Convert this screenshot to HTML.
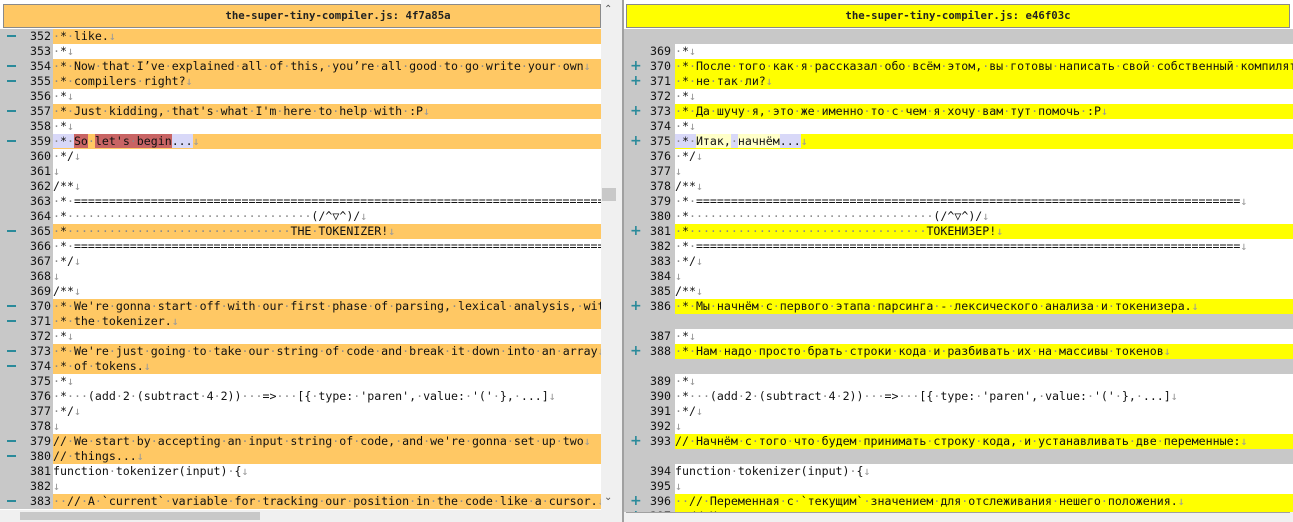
<!DOCTYPE html>
<html><head><meta charset="utf-8">
<style>
*{margin:0;padding:0;box-sizing:border-box}
body{width:1293px;height:522px;overflow:hidden;background:#f0f0f0;position:relative;font-family:"DejaVu Sans Mono","Liberation Mono",monospace}
.pane{position:absolute;top:0;height:522px;background:#fff;overflow:hidden}
.hdr{position:absolute;top:4px;height:24px;border:1px solid #8a8a8a;font:bold 10.7px "DejaVu Sans Mono",monospace;text-align:center;line-height:22px;color:#222}
.rows{position:absolute;top:29px;left:0;right:0}
.r{position:relative;height:15px;line-height:15px;font-size:11.6px;white-space:pre;color:#111}
.g{position:absolute;left:0;top:0;height:15px;background:#c8c8c8}
.n{position:absolute;top:0;text-align:right;color:#111}
.m{position:absolute;top:6px;width:9px;height:2px;background:#2a8a9a}
.p{position:absolute;top:0;color:#2a8a9a;font-weight:bold;font-family:"DejaVu Sans",sans-serif;font-size:14px;line-height:15px}
.t{position:absolute;top:0;right:0;height:15px;overflow:hidden}
.L .g{width:53px}.L .n{left:18px;width:33px}.L .m{left:7px}.L .t{left:53px}
.R .g{width:51px}.R .n{left:12px;width:35px}.R .p{left:6px}.R .t{left:51px}
.o .t{background:#ffc864}
.y .t{background:#ffff00}
.x{background:#c8c8c8}
.x .t{background:#c8c8c8}
.d{color:#8a8a8a}
.a{color:#9a9a9a}
.red{background:#c86464}
.lav{background:#d8d8f8}
.ly{background:#ffffc8}
</style></head><body>

<div class="pane" style="left:0;width:601px">
<div class="hdr" style="left:3px;width:598px;background:#ffc864;padding-left:72px">the-super-tiny-compiler.js: 4f7a85a</div>
<div class="rows L">
<div class="r o"><div class="g"></div><span class="m"></span><span class="n">352</span><span class="t"> * like.</span></div>
<div class="r"><div class="g"></div><span class="n">353</span><span class="t"> *</span></div>
<div class="r o"><div class="g"></div><span class="m"></span><span class="n">354</span><span class="t"> * Now that I’ve explained all of this, you’re all good to go write your own</span></div>
<div class="r o"><div class="g"></div><span class="m"></span><span class="n">355</span><span class="t"> * compilers right?</span></div>
<div class="r"><div class="g"></div><span class="n">356</span><span class="t"> *</span></div>
<div class="r o"><div class="g"></div><span class="m"></span><span class="n">357</span><span class="t"> * Just kidding, that's what I'm here to help with :P</span></div>
<div class="r"><div class="g"></div><span class="n">358</span><span class="t"> *</span></div>
<div class="r o"><div class="g"></div><span class="m"></span><span class="n">359</span><span class="t"><span class="lav"> * </span><span class="red">So</span> <span class="red">let's begin</span><span class="lav">...</span></span></div>
<div class="r"><div class="g"></div><span class="n">360</span><span class="t"> */</span></div>
<div class="r"><div class="g"></div><span class="n">361</span><span class="t"></span></div>
<div class="r"><div class="g"></div><span class="n">362</span><span class="t">/**</span></div>
<div class="r"><div class="g"></div><span class="n">363</span><span class="t"> * ==============================================================================</span></div>
<div class="r"><div class="g"></div><span class="n">364</span><span class="t"> *                                   (/^▽^)/</span></div>
<div class="r o"><div class="g"></div><span class="m"></span><span class="n">365</span><span class="t"> *                                THE TOKENIZER!</span></div>
<div class="r"><div class="g"></div><span class="n">366</span><span class="t"> * ==============================================================================</span></div>
<div class="r"><div class="g"></div><span class="n">367</span><span class="t"> */</span></div>
<div class="r"><div class="g"></div><span class="n">368</span><span class="t"></span></div>
<div class="r"><div class="g"></div><span class="n">369</span><span class="t">/**</span></div>
<div class="r o"><div class="g"></div><span class="m"></span><span class="n">370</span><span class="t"> * We're gonna start off with our first phase of parsing, lexical analysis, with</span></div>
<div class="r o"><div class="g"></div><span class="m"></span><span class="n">371</span><span class="t"> * the tokenizer.</span></div>
<div class="r"><div class="g"></div><span class="n">372</span><span class="t"> *</span></div>
<div class="r o"><div class="g"></div><span class="m"></span><span class="n">373</span><span class="t"> * We're just going to take our string of code and break it down into an array</span></div>
<div class="r o"><div class="g"></div><span class="m"></span><span class="n">374</span><span class="t"> * of tokens.</span></div>
<div class="r"><div class="g"></div><span class="n">375</span><span class="t"> *</span></div>
<div class="r"><div class="g"></div><span class="n">376</span><span class="t"> *   (add 2 (subtract 4 2))   =>   [{ type: 'paren', value: '(' }, ...]</span></div>
<div class="r"><div class="g"></div><span class="n">377</span><span class="t"> */</span></div>
<div class="r"><div class="g"></div><span class="n">378</span><span class="t"></span></div>
<div class="r o"><div class="g"></div><span class="m"></span><span class="n">379</span><span class="t">// We start by accepting an input string of code, and we're gonna set up two</span></div>
<div class="r o"><div class="g"></div><span class="m"></span><span class="n">380</span><span class="t">// things...</span></div>
<div class="r"><div class="g"></div><span class="n">381</span><span class="t">function tokenizer(input) {</span></div>
<div class="r"><div class="g"></div><span class="n">382</span><span class="t"></span></div>
<div class="r o"><div class="g"></div><span class="m"></span><span class="n">383</span><span class="t">  // A `current` variable for tracking our position in the code like a cursor.</span></div>
</div>
<div style="position:absolute;left:0;top:510px;width:601px;height:12px;background:#f0f0f0"><div style="position:absolute;left:20px;top:2px;width:240px;height:8px;background:#c8c8c8"></div></div>
</div>

<div style="position:absolute;left:601px;top:0;width:16px;height:510px;background:#f0f0f0">
<div style="position:absolute;left:3px;top:4px;font:10px 'DejaVu Sans',sans-serif;color:#555">⌃</div>
<div style="position:absolute;left:1px;top:188px;width:14px;height:13px;background:#c8c8c8"></div>
<div style="position:absolute;left:3px;top:492px;font:10px 'DejaVu Sans',sans-serif;color:#555">⌄</div>
</div>
<div style="position:absolute;left:622px;top:0;width:2px;height:522px;background:#a0a0a0"></div>

<div class="pane" style="left:624px;width:669px">
<div class="hdr" style="left:2px;width:664px;background:#ffff00">the-super-tiny-compiler.js: e46f03c</div>
<div class="rows R">
<div class="r x"><div class="g"></div><span class="t"></span></div>
<div class="r"><div class="g"></div><span class="n">369</span><span class="t"> *</span></div>
<div class="r y"><div class="g"></div><span class="p">+</span><span class="n">370</span><span class="t"> * После того как я рассказал обо всём этом, вы готовы написать свой собственный компилятор</span></div>
<div class="r y"><div class="g"></div><span class="p">+</span><span class="n">371</span><span class="t"> * не так ли?</span></div>
<div class="r"><div class="g"></div><span class="n">372</span><span class="t"> *</span></div>
<div class="r y"><div class="g"></div><span class="p">+</span><span class="n">373</span><span class="t"> * Да шучу я, это же именно то с чем я хочу вам тут помочь :P</span></div>
<div class="r"><div class="g"></div><span class="n">374</span><span class="t"> *</span></div>
<div class="r y"><div class="g"></div><span class="p">+</span><span class="n">375</span><span class="t"><span class="lav"> * </span><span class="ly">Итак,</span><span class="lav"> </span><span class="ly">начнём</span><span class="lav">...</span></span></div>
<div class="r"><div class="g"></div><span class="n">376</span><span class="t"> */</span></div>
<div class="r"><div class="g"></div><span class="n">377</span><span class="t"></span></div>
<div class="r"><div class="g"></div><span class="n">378</span><span class="t">/**</span></div>
<div class="r"><div class="g"></div><span class="n">379</span><span class="t"> * ==============================================================================</span></div>
<div class="r"><div class="g"></div><span class="n">380</span><span class="t"> *                                   (/^▽^)/</span></div>
<div class="r y"><div class="g"></div><span class="p">+</span><span class="n">381</span><span class="t"> *                                  ТОКЕНИЗЕР!</span></div>
<div class="r"><div class="g"></div><span class="n">382</span><span class="t"> * ==============================================================================</span></div>
<div class="r"><div class="g"></div><span class="n">383</span><span class="t"> */</span></div>
<div class="r"><div class="g"></div><span class="n">384</span><span class="t"></span></div>
<div class="r"><div class="g"></div><span class="n">385</span><span class="t">/**</span></div>
<div class="r y"><div class="g"></div><span class="p">+</span><span class="n">386</span><span class="t"> * Мы начнём с первого этапа парсинга - лексического анализа и токенизера.</span></div>
<div class="r x"><div class="g"></div><span class="t"></span></div>
<div class="r"><div class="g"></div><span class="n">387</span><span class="t"> *</span></div>
<div class="r y"><div class="g"></div><span class="p">+</span><span class="n">388</span><span class="t"> * Нам надо просто брать строки кода и разбивать их на массивы токенов</span></div>
<div class="r x"><div class="g"></div><span class="t"></span></div>
<div class="r"><div class="g"></div><span class="n">389</span><span class="t"> *</span></div>
<div class="r"><div class="g"></div><span class="n">390</span><span class="t"> *   (add 2 (subtract 4 2))   =>   [{ type: 'paren', value: '(' }, ...]</span></div>
<div class="r"><div class="g"></div><span class="n">391</span><span class="t"> */</span></div>
<div class="r"><div class="g"></div><span class="n">392</span><span class="t"></span></div>
<div class="r y"><div class="g"></div><span class="p">+</span><span class="n">393</span><span class="t">// Начнём с того что будем принимать строку кода, и устанавливать две переменные:</span></div>
<div class="r x"><div class="g"></div><span class="t"></span></div>
<div class="r"><div class="g"></div><span class="n">394</span><span class="t">function tokenizer(input) {</span></div>
<div class="r"><div class="g"></div><span class="n">395</span><span class="t"></span></div>
<div class="r y"><div class="g"></div><span class="p">+</span><span class="n">396</span><span class="t">  // Переменная с `текущим` значением для отслеживания нешего положения.</span></div>
<div class="r y"><div class="g"></div><span class="p">+</span><span class="n">397</span><span class="t">  // Что-то вроде курсора для кода.</span></div>
</div>
<div style="position:absolute;left:0;top:512px;width:669px;height:10px;background:#f0f0f0"><div style="position:absolute;left:2px;top:0;width:664px;height:1px;background:#a0a0a0"></div></div>
</div>

<script>
function proc(node){
  var kids=Array.prototype.slice.call(node.childNodes);
  kids.forEach(function(k){
    if(k.nodeType===3){
      var s=k.nodeValue,frag=document.createDocumentFragment(),buf='';
      for(var i=0;i<s.length;i++){
        if(s[i]===' '){
          if(buf){frag.appendChild(document.createTextNode(buf));buf='';}
          var sp=document.createElement('span');sp.className='d';sp.textContent='·';frag.appendChild(sp);
        }else buf+=s[i];
      }
      if(buf)frag.appendChild(document.createTextNode(buf));
      node.replaceChild(frag,k);
    }else if(k.nodeType===1)proc(k);
  });
}
document.querySelectorAll('.r').forEach(function(r){
  if(r.classList.contains('x'))return;
  var t=r.querySelector('.t');proc(t);
  var a=document.createElement('span');a.className='a';a.textContent='↓';t.appendChild(a);
});
</script>
</body></html>
